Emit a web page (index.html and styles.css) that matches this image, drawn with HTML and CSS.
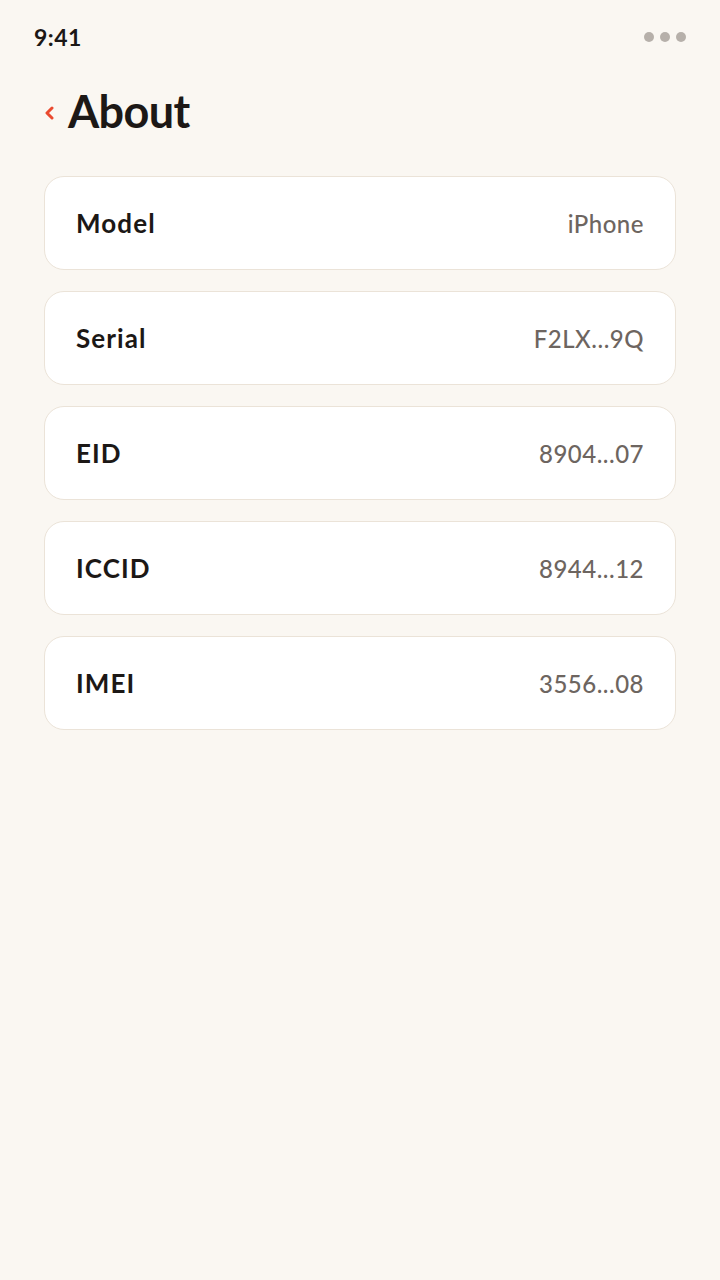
FILE: index.html
```html
<!DOCTYPE html>
<html lang="en">
<head>
<meta charset="utf-8">
<title>About</title>
<link rel="stylesheet" href="styles.css">
</head>
<body>
<div class="screen">
  <div class="status">
    <span class="time">9:41</span>
    <span class="dots"><i></i><i></i><i></i></span>
  </div>
  <header class="header">
    <svg class="back" width="10" height="14" viewBox="0 0 10 14"><path d="M8 2 L3 7 L8 12" fill="none" stroke="#ea4a2f" stroke-width="3" stroke-linecap="round" stroke-linejoin="round"/></svg>
    <h1 class="title">About</h1>
  </header>
  <div class="list">
    <div class="row"><span class="label">Model</span><span class="value">iPhone</span></div>
    <div class="row"><span class="label">Serial</span><span class="value">F2LX...9Q</span></div>
    <div class="row"><span class="label">EID</span><span class="value">8904...07</span></div>
    <div class="row"><span class="label">ICCID</span><span class="value">8944...12</span></div>
    <div class="row"><span class="label">IMEI</span><span class="value">3556...08</span></div>
  </div>
</div>
</body>
</html>
```
FILE: styles.css
```css
html, body {
  margin: 0;
  padding: 0;
  background: #faf7f2;
}
body {
  font-family: "Lato", "Inter", sans-serif;
  color: #1c1816;
}
.screen {
  width: 720px;
  min-height: 1280px;
  box-sizing: border-box;
  padding: 0 44px;
}
.status {
  display: flex;
  justify-content: space-between;
  align-items: center;
  height: 74px;
  margin: 0 -10px;
}
.time {
  font-size: 23px;
  font-weight: 700;
  letter-spacing: 0.5px;
}
.dots {
  display: flex;
  gap: 6px;
}
.dots i {
  display: block;
  width: 10px;
  height: 10px;
  border-radius: 50%;
  background: #b6b0aa;
}
.header {
  display: flex;
  align-items: center;
  gap: 14px;
  height: 74px;
  margin-bottom: 28px;
}
.back {
  display: block;
  margin-top: 4px;
}
.title {
  margin: 0;
  font-size: 45px;
  font-weight: 700;
  letter-spacing: -0.6px;
}
.list {
  display: flex;
  flex-direction: column;
  gap: 21px;
}
.row {
  display: flex;
  justify-content: space-between;
  align-items: center;
  height: 94px;
  box-sizing: border-box;
  padding: 0 31px;
  background: #ffffff;
  border: 1px solid #ebe3d8;
  border-radius: 20px;
}
.label {
  font-size: 26px;
  font-weight: 700;
  letter-spacing: 1.1px;
}
.value {
  font-size: 24px;
  font-weight: 500;
  letter-spacing: 0.5px;
  color: #6d6560;
}
```
